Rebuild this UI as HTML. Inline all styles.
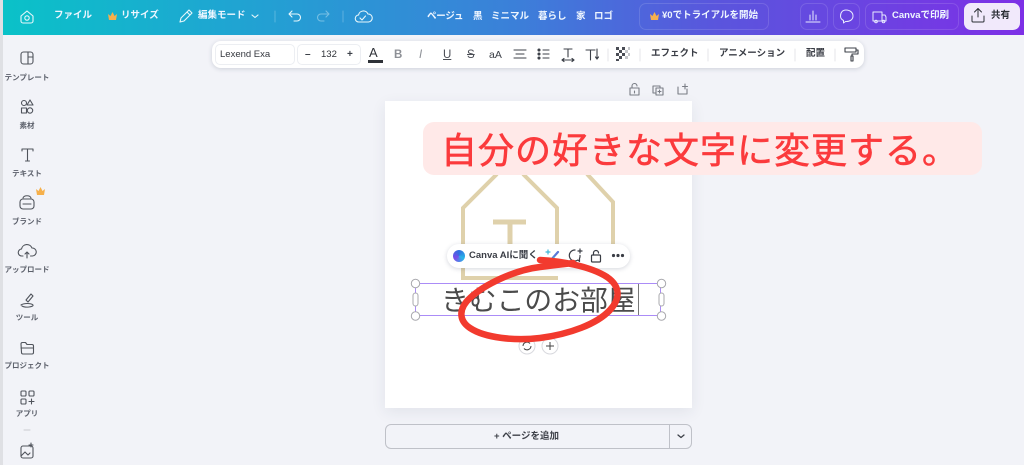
<!DOCTYPE html>
<html lang="ja"><head><meta charset="utf-8"><style>
*{box-sizing:border-box;margin:0;padding:0}
html,body{width:1024px;height:465px;overflow:hidden;background:#f2f3f8}
body{position:relative;font-family:"Liberation Sans","Noto Sans CJK JP",sans-serif;color:#3c4048}
.a{position:absolute;white-space:nowrap}
.t{color:#eef6ff;font-size:9.5px;font-weight:700;line-height:12px;height:12px}
.s{font-size:7.5px;font-weight:700;color:#5c606b;width:54px;text-align:center;line-height:10px}
.b{font-size:9.5px;font-weight:700;color:#3a3d45;line-height:12px}
svg{position:absolute;overflow:visible;fill:none}
</style></head><body>
<div class="a" style="left:0;top:0;width:3px;height:465px;background:#dfe0e4"></div>
<div class="a" style="left:3px;top:0;width:1021px;height:35px;background:linear-gradient(90deg,#0ac2c8 0%,#1fa5d2 22%,#3b80d9 50%,#5a55dd 70%,#7d30e6 100%)"></div>

<svg style="left:0;top:0" width="400" height="35" stroke="#e8f7fb" stroke-width="1.1" stroke-linecap="round" stroke-linejoin="round">
<path d="M21 16l6-5 6 5v5a2 2 0 0 1-2 2h-8a2 2 0 0 1-2-2z"/><circle cx="27" cy="18" r="2.2"/>
<path d="M180 22l1-4 8-8 3 3-8 8zM187 12l3 3"/>
<path d="M252 15l3 2.500 3-2.500"/>
<path d="M275 11v11" stroke-opacity=".25"/>
<path d="M292 11l-3 3 3 3M289 14h8a3.500 3.500 0 0 1 0 7h-3"/>
<path d="M326 11l3 3-3 3M329 14h-8a3.500 3.500 0 0 0 0 7h3" stroke-opacity=".4"/>
<path d="M343 11v11" stroke-opacity=".25"/>
<path d="M360 22h-1a3.500 3.500 0 0 1-.5-7 5 5 0 0 1 9.500-1 4 4 0 0 1 .5 8z"/><path d="M360 18l2 2 3.500-4"/>
</svg>
<div class="a t" style="left:54px;top:10px">ファイル</div>
<svg style="left:108px;top:12px" width="9" height="8"><path d="M0 2l2.500 2L4.500 0l2 4 2.500-2-1 6H1z" fill="#f6b04b"/></svg>
<div class="a t" style="left:121px;top:10px">リサイズ</div>
<div class="a t" style="left:198px;top:10px">編集モード</div>
<div class="a t" style="left:427px;top:11px;letter-spacing:-.2px">ページュ</div>
<div class="a t" style="left:473px;top:11px">黒</div>
<div class="a t" style="left:491px;top:11px">ミニマル</div>
<div class="a t" style="left:538px;top:11px">暮らし</div>
<div class="a t" style="left:576px;top:11px">家</div>
<div class="a t" style="left:594px;top:11px">ロゴ</div>

<div class="a" style="left:639px;top:3px;width:130px;height:27px;border:1px solid rgba(255,255,255,.13);border-radius:7px"></div>
<svg style="left:650px;top:12px" width="9" height="8"><path d="M0 2l2.500 2L4.500 0l2 4 2.500-2-1 6H1z" fill="#f6b04b"/></svg>
<div class="a t" style="left:662px;top:10px">¥0でトライアルを開始</div>
<div class="a" style="left:800px;top:3px;width:28px;height:27px;border:1px solid rgba(255,255,255,.13);border-radius:7px"></div>
<div class="a" style="left:833px;top:3px;width:27px;height:27px;border:1px solid rgba(255,255,255,.13);border-radius:7px"></div>
<div class="a" style="left:865px;top:3px;width:94px;height:27px;border:1px solid rgba(255,255,255,.13);border-radius:7px"></div>
<div class="a t" style="left:892px;top:10px">Canvaで印刷</div>
<div class="a" style="left:964px;top:3px;width:56px;height:27px;background:#f1e9fb;border-radius:7px"></div>
<div class="a" style="left:991px;top:10px;font-size:9.5px;font-weight:700;color:#2c2f36;line-height:12px">共有</div>
<svg style="left:795px;top:0" width="229" height="35" stroke="#e8eaff" stroke-width="1" stroke-linecap="round" stroke-linejoin="round">
<path d="M11 22h14M15 20v-5M18 20V11M21 20v-5"/>
<path d="M51 10c4 0 7 2.500 7 6s-3 5.500-6.500 5.500h-1l-2 1.500v-2.500c-2-1-3-2.500-3-4.500 0-3.500 2-6 5.500-6z"/>
<path d="M78 12h9v9h-9zM87 15h3l1 2v4h-4"/><circle cx="81" cy="21.500" r="1.300"/><circle cx="88.500" cy="21.500" r="1.300"/>
<path stroke="#2c2f36" d="M177 16v5a1 1 0 0 0 1 1h10a1 1 0 0 0 1-1v-5M183 17V9M179.500 12l3.500-3.500 3.500 3.500"/>
</svg>

<div class="a" style="left:212px;top:41px;width:652px;height:27px;background:#fff;border-radius:9px;box-shadow:0 1px 5px rgba(40,50,80,.18)"></div>
<div class="a" style="left:215px;top:44px;width:80px;height:21px;border:1px solid #eceef2;border-radius:5px"></div>
<div class="a" style="left:297px;top:44px;width:64px;height:21px;border:1px solid #eceef2;border-radius:5px"></div>
<div class="a" style="left:220px;top:49px;font-size:9.5px;line-height:12px;color:#35383f">Lexend Exa</div>
<div class="a" style="left:305px;top:49px;font-size:10px;line-height:12px;font-weight:700">–</div>
<div class="a" style="left:321px;top:49px;font-size:9.500px;line-height:12px;color:#2f3238">132</div>
<div class="a" style="left:347px;top:49px;font-size:10px;line-height:12px;font-weight:700">+</div>
<div class="a" style="left:369px;top:45px;font-size:13px;line-height:15px;color:#2f3238;font-weight:400">A</div>
<div class="a" style="left:368px;top:60px;width:15px;height:2.500px;background:#2f3238"></div>
<div class="a" style="left:394px;top:48px;font-size:11.500px;line-height:14px;font-weight:700;color:#8d9096">B</div>
<div class="a" style="left:419px;top:48px;font-size:11.500px;line-height:14px;font-style:italic;color:#8d9096">I</div>
<div class="a" style="left:443px;top:48px;font-size:11.500px;line-height:14px;text-decoration:underline;color:#4a4d55">U</div>
<div class="a" style="left:467px;top:48px;font-size:11.500px;line-height:14px;text-decoration:line-through;color:#4a4d55">S</div>
<div class="a" style="left:489px;top:49px;font-size:10.500px;line-height:13px;color:#3c4048">aA</div>
<svg style="left:0;top:0" width="880" height="100" stroke="#3c4048" stroke-width="1.100" stroke-linecap="round" stroke-linejoin="round">
<path d="M514 50h12M516 54h8M514 58h12"/>
<path d="M543 50h6M543 54h6M543 58h6"/><circle cx="539" cy="50" r="1" fill="#3c4048"/><circle cx="539" cy="54" r="1" fill="#3c4048"/><circle cx="539" cy="58" r="1" fill="#3c4048"/>
<path d="M564 49h8M568 49v8M562 60h12M562 60l2-1.500M562 60l2 1.500M574 60l-2-1.500M574 60l-2 1.500"/>
<path d="M586 50h9M590.500 50v10M597 49v10M595.500 57l1.500 2 1.500-2"/>
<path d="M608 49v12M640 49v12M708 49v12M795 49v12M835 49v12" stroke="#e6e7eb"/>
<path d="M845 48h11v4h-11zM856 50h2v4h-6v2M851 56h2v5h-2z"/>
<path stroke="#7a7e86" d="M630 88h9v7h-9zM632 88v-2a2.500 2.500 0 0 1 5 0M634.500 91v2"/>
<path stroke="#7a7e86" d="M653 86h7v2M656 88h7v7h-7zM653 86v7h3M659.500 90v3M658 91.500h3"/>
<path stroke="#7a7e86" d="M678 87v7h9v-5M685 84v5M682.500 86.500h5"/>
</svg>
<svg style="left:616px;top:47px" width="14" height="14"><g fill="#4a4d55">
<rect x="0" y="0" width="3" height="3"/><rect x="6" y="0" width="3" height="3"/><rect x="3" y="3" width="3" height="3"/><rect x="0" y="6" width="3" height="3"/><rect x="6" y="6" width="3" height="3"/><rect x="3" y="9" width="3" height="3"/><rect x="0" y="12" width="3" height="2"/></g>
<g fill="#c5c7cb"><rect x="9" y="3" width="3" height="3"/><rect x="9" y="9" width="3" height="3"/><rect x="12" y="0" width="2" height="3"/><rect x="12" y="6" width="2" height="3"/></g></svg>
<div class="a b" style="left:651px;top:48px">エフェクト</div>
<div class="a b" style="left:719px;top:48px">アニメーション</div>
<div class="a b" style="left:806px;top:48px">配置</div>

<svg style="left:0;top:40px" width="60" height="425" stroke="#50545c" stroke-width="1.100" stroke-linecap="round" stroke-linejoin="round">
<rect x="21" y="12" width="12" height="12" rx="2.500"/><path d="M28 12v12M28 17h5"/>
<circle cx="24" cy="63" r="2.500"/><path d="M30 60l3 5h-6z"/><rect x="21.500" y="68" width="5" height="5"/><circle cx="30" cy="70.500" r="2.700"/>
<path d="M22 111v-2h11v2M27.500 109v12M25.500 121h4"/>
<rect x="20" y="159" width="14" height="10" rx="3"/><path d="M23 158c1-3 7-3 8 0M23 164h8"/>
<path d="M23 216h-1a3.500 3.500 0 0 1-.5-7 5.500 5.500 0 0 1 10.500-1 4 4 0 0 1 .5 8h-2M27 218v-6M25 214l2-2 2 2"/>
<path d="M21 265c3-2 10-2 12 0 1 2-8 3-11 1M26 260l5-6 2 2-5 6z"/>
<path d="M21 304a1.500 1.500 0 0 1 1.500-1.500h3l1.500 2h5a1.500 1.500 0 0 1 1.500 1.500v6.500a1.500 1.500 0 0 1-1.500 1.500h-9a1.500 1.500 0 0 1-1.500-1.500z"/><path d="M21 308h12"/>
<rect x="21" y="351" width="5" height="5" rx="1"/><rect x="29" y="351" width="5" height="5" rx="1"/><rect x="21" y="359" width="5" height="5" rx="1"/><path d="M31.500 359v5M29 361.500h5"/>
<path d="M24 390h6" stroke="#c9cbd0"/>
<rect x="21" y="406" width="12" height="12" rx="2"/><path d="M21 416l4-4 3 3 2-2M31 403v4M29 405h4"/>
</svg>
<svg style="left:36px;top:187px" width="9" height="8"><path d="M0 2l2.500 2L4.500 0l2 4 2.500-2-1 6H1z" fill="#f6b04b"/></svg>
<div class="a s" style="left:0;top:72.500px">テンプレート</div>
<div class="a s" style="left:0;top:121px">素材</div>
<div class="a s" style="left:0;top:169px">テキスト</div>
<div class="a s" style="left:0;top:217px">ブランド</div>
<div class="a s" style="left:0;top:265px">アップロード</div>
<div class="a s" style="left:0;top:313px">ツール</div>
<div class="a s" style="left:0;top:361px">プロジェクト</div>
<div class="a s" style="left:0;top:409px">アプリ</div>

<div class="a" style="left:385px;top:101px;width:307px;height:307px;background:#fff;box-shadow:0 4px 14px rgba(40,50,80,.08)"></div>
<svg style="left:0;top:0" width="1024" height="465">
<path d="M497 174l-34 34v70h95M523 174l34 34v40" stroke="#dfd1ab" stroke-width="4"/>
<path d="M587 174l26 28v46" stroke="#dfd1ab" stroke-width="4"/>
<path d="M493 222h33M510 222v26" stroke="#dfd1ab" stroke-width="5"/>
</svg>

<div class="a" style="left:423px;top:122px;width:559px;height:53px;background:#ffe9e8;border-radius:11px"></div>
<div class="a" style="left:441px;top:125px;font-family:'WenQuanYi Zen Hei','Noto Sans CJK JP',sans-serif;font-size:36px;line-height:46px;color:#fb3a3c;letter-spacing:1px;-webkit-text-stroke:.6px #fb3a3c">自分の好きな文字に変更する。</div>

<div class="a" style="left:415px;top:283px;width:246px;height:33px;border:1.500px solid #ab8cf7"></div>
<div class="a" style="left:441px;top:283px;font-size:27.800px;line-height:36px;color:#4b4b4b;font-weight:400">きむこのお部屋</div>
<div class="a" style="left:638px;top:284px;width:1px;height:31px;background:#777"></div>
<svg style="left:0;top:0" width="1024" height="465" stroke="#a8a8ad" stroke-width="1">
<circle cx="415.500" cy="283.500" r="4.200" fill="#fff"/><circle cx="661.500" cy="283.500" r="4.200" fill="#fff"/><circle cx="415.500" cy="316" r="4.200" fill="#fff"/><circle cx="661.500" cy="316" r="4.200" fill="#fff"/>
<rect x="413" y="293" width="5" height="13" rx="2.500" fill="#fff"/><rect x="659" y="293" width="5" height="13" rx="2.500" fill="#fff"/>
<circle cx="527" cy="346" r="8" fill="#fff" stroke="#d8d9de"/><circle cx="550" cy="346" r="8" fill="#fff" stroke="#d8d9de"/>
<path d="M523 346a4 4 0 0 1 7-2.500M531 346a4 4 0 0 1-7 2.500" stroke="#444"/><path d="M550 342v8M546 346h8" stroke="#444"/>
</svg>

<div class="a" style="left:447px;top:244px;width:183px;height:24px;background:#fff;border-radius:12px;box-shadow:0 1px 5px rgba(40,50,80,.2)"></div>
<div class="a" style="left:453px;top:250px;width:12px;height:12px;border-radius:50%;background:conic-gradient(#2f6fe0,#28b6e8,#7d4be8,#2f6fe0)"></div>
<div class="a" style="left:469px;top:250px;font-size:9.500px;font-weight:700;line-height:12px;color:#3a3d45">Canva AIに聞く</div>
<svg style="left:0;top:0" width="1024" height="465" stroke="#3a3d45" stroke-width="1.200" stroke-linecap="round" stroke-linejoin="round">
<path d="M550 261l8-9" stroke="#5a78d8" stroke-width="2.200"/><path d="M548 250v4M546 252h4M554 257v3" stroke="#3fb6d8"/>
<path d="M575 250a5.500 5.500 0 1 0 3 10l1.500 1.500v-3a5.500 5.500 0 0 0 .5-3M580 249v4M578 251h4"/>
<rect x="591.500" y="255" width="9" height="7" rx="1"/><path d="M593.500 255v-2a2.500 2.500 0 0 1 5 0"/>
<circle cx="613.500" cy="255.500" r="1" fill="#3a3d45"/><circle cx="618" cy="255.500" r="1" fill="#3a3d45"/><circle cx="622.500" cy="255.500" r="1" fill="#3a3d45"/>
</svg>

<svg style="left:0;top:0" width="1024" height="465">
<path d="M540 260C560 261 590 266 607 277C620 286 621 298 610 310C597 324 570 334 540 338C515 341 485 338 470 328C458 320 459 308 470 298C485 284 515 270 540 267C555 265 565 264 573 263" stroke="#f23a2e" stroke-width="6.500" stroke-linecap="round"/>
</svg>

<div class="a" style="left:385px;top:424px;width:307px;height:25px;border:1px solid #bfc1c8;border-radius:6px"></div>
<div class="a" style="left:669px;top:424px;width:1px;height:25px;background:#bfc1c8"></div>
<div class="a" style="left:494px;top:431px;font-size:9.500px;font-weight:700;line-height:12px;color:#3e4149">+ ページを追加</div>
<svg style="left:0;top:0" width="1024" height="465" stroke="#3e4149" stroke-width="1.300" stroke-linecap="round" stroke-linejoin="round"><path d="M678 435l3 2.500 3-2.500"/></svg>
</body></html>
